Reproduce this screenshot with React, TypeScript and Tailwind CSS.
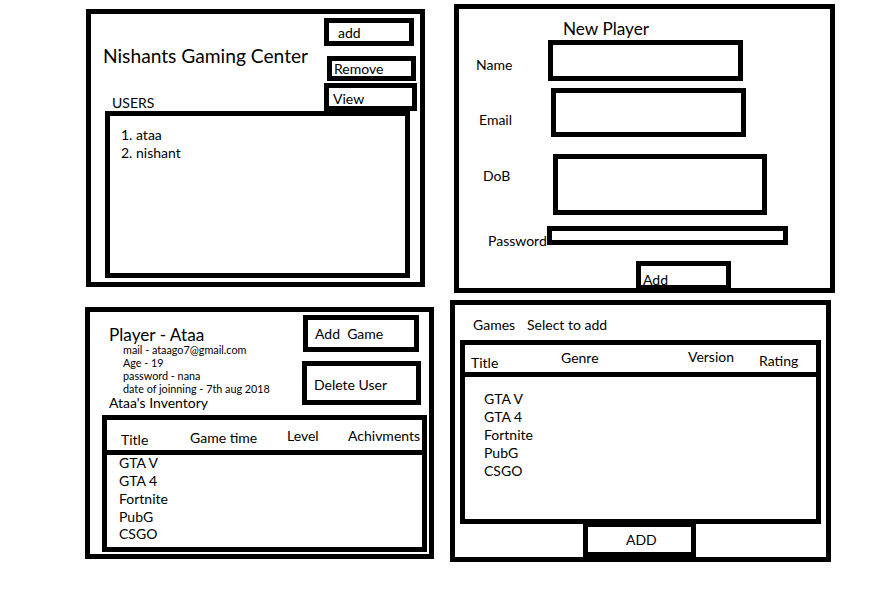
import React from "react";

const t = "text-[14px] leading-none whitespace-nowrap";

function UsersPanel() {
  return (
    <div className="ml-[1px] mt-[9px] w-[339px] h-[278px] border-[5px] border-black flex flex-col">
      <div className="flex h-[97px]">
        <div className="flex-1 flex flex-col">
          <div className="ml-[12px] mt-[32px] text-[19.2px] leading-none whitespace-nowrap">Nishants Gaming Center</div>
          <div className={`ml-[21px] mt-[31px] ${t}`}>USERS</div>
        </div>
        <div className="w-[93px] mr-[3px] flex flex-col">
          <div className="mt-[4px] w-[90px] h-[28px] border-[5px] border-black">
            <div className={`pl-[9px] pt-[3px] ${t}`}>add</div>
          </div>
          <div className="mt-[10px] ml-[3px] w-[89px] h-[25px] border-[5px] border-black">
            <div className={`pl-[2px] pt-[1px] ${t}`}>Remove</div>
          </div>
          <div className="mt-[2px] w-[93px] h-[28px] border-[5px] border-black">
            <div className={`pl-[4px] pt-[4px] ${t}`}>View</div>
          </div>
        </div>
      </div>
      <div className="ml-[14px] w-[305px] h-[167px] border-[5px] border-black pl-[11px] pt-[10px] text-[14px] leading-[18px]">
        <div>1. ataa</div>
        <div>2. nishant</div>
      </div>
    </div>
  );
}

function PlayerPanel() {
  const games = ["GTA V", "GTA 4", "Fortnite", "PubG", "CSGO"];
  return (
    <div className="mt-[20px] w-[349px] h-[252px] border-[5px] border-black flex flex-col">
      <div className="flex h-[103px]">
        <div className="flex-1 flex flex-col">
          <div className="ml-[19px] mt-[14px] text-[17.2px] leading-none whitespace-nowrap">Player - Ataa</div>
          <div className="ml-[33px] text-[10.8px] leading-[13px] whitespace-nowrap">
            <div>mail - ataago7@gmail.com</div>
            <div>Age - 19</div>
            <div>password - nana</div>
            <div>date of joinning - 7th aug 2018</div>
          </div>
          <div className="ml-[19px] mt-[1px] text-[14px] leading-none whitespace-nowrap">Ataa's Inventory</div>
        </div>
        <div className="w-[119px] mr-[8px] flex flex-col">
          <div className={`mt-[3px] ml-[1px] w-[116px] h-[37px] border-[5px] border-black pl-[7px] pt-[7px] text-[14px] leading-none whitespace-pre`}>Add  Game</div>
          <div className={`mt-[9px] w-[119px] h-[44px] border-[5px] border-black pl-[7px] pt-[12px] ${t}`}>Delete User</div>
        </div>
      </div>
      <div className="ml-[12px] w-[325px] h-[137px] border-[5px] border-black flex flex-col">
        <div className={`h-[30px] flex ${t}`}>
          <div className="w-[83px] pl-[14px] pt-[13px]">Title</div>
          <div className="w-[97px] pt-[11px]">Game time</div>
          <div className="w-[61px] pt-[9px]">Level</div>
          <div className="pt-[9px]">Achivments</div>
        </div>
        <div className="h-[5px] bg-black" />
        <div className="pl-[12px] mt-[-1px] text-[14px] leading-[17.85px]">
          {games.map((g) => (
            <div key={g}>{g}</div>
          ))}
        </div>
      </div>
    </div>
  );
}

function NewPlayerPanel() {
  return (
    <div className="ml-[4px] mt-[4px] w-[381px] h-[289px] border-[5px] border-black flex flex-col">
      <div className="ml-[104px] mt-[11px] text-[17.2px] leading-none whitespace-nowrap">New Player</div>
      <div className="mt-[3px] flex items-start">
        <div className={`w-[89px] pl-[17px] pt-[18px] ${t}`}>Name</div>
        <div className="w-[195px] h-[41px] border-[5px] border-black" />
      </div>
      <div className="mt-[7px] flex items-start">
        <div className={`w-[92px] pl-[20px] pt-[25px] ${t}`}>Email</div>
        <div className="w-[195px] h-[49px] border-[5px] border-black" />
      </div>
      <div className="mt-[17px] flex items-start">
        <div className={`w-[94px] pl-[24px] pt-[15px] ${t}`}>DoB</div>
        <div className="w-[214px] h-[61px] border-[5px] border-black" />
      </div>
      <div className="mt-[11px] flex items-start">
        <div className={`w-[88px] pl-[29px] pt-[8px] ${t}`}>Password</div>
        <div className="w-[241px] h-[19px] border-[5px] border-black" />
      </div>
      <div className={`mt-[13px] ml-[177px] w-[95px] h-[29px] border-[5px] border-black pl-[2px] pt-[6.5px] ${t}`}>Add</div>
    </div>
  );
}

function GamesPanel() {
  const games = ["GTA V", "GTA 4", "Fortnite", "PubG", "CSGO"];
  return (
    <div className="mt-[7px] w-[381px] h-[262px] border-[5px] border-black flex flex-col">
      <div className={`flex ml-[18px] mt-[13px] ${t}`}>
        <div className="w-[54px]">Games</div>
        <div>Select to add</div>
      </div>
      <div className="mt-[8px] ml-[5px] w-[361px] h-[184px] border-[5px] border-black flex flex-col">
        <div className={`h-[27px] flex ${t}`}>
          <div className="w-[96px] pl-[6px] pt-[11px]">Title</div>
          <div className="w-[127px] pt-[6px]">Genre</div>
          <div className="w-[71px] pt-[5px]">Version</div>
          <div className="pt-[9px]">Rating</div>
        </div>
        <div className="h-[5px] bg-black" />
        <div className="pl-[19px] pt-[13px] text-[14px] leading-[17.9px]">
          {games.map((g) => (
            <div key={g}>{g}</div>
          ))}
        </div>
      </div>
      <div className={`ml-[128px] w-[113px] h-[33px] border-x-[5px] border-t-[3px] border-b-[5px] border-black pl-[38px] pt-[5.5px] ${t}`}>ADD</div>
    </div>
  );
}

export default function App() {
  return (
    <div className="w-[888px] h-[614px] bg-white text-black font-[Lato,sans-serif] flex pl-[85px] overflow-hidden">
      <div className="flex flex-col w-[349px] shrink-0">
        <UsersPanel />
        <PlayerPanel />
      </div>
      <div className="flex flex-col ml-[16px] w-[385px] shrink-0">
        <NewPlayerPanel />
        <GamesPanel />
      </div>
    </div>
  );
}
